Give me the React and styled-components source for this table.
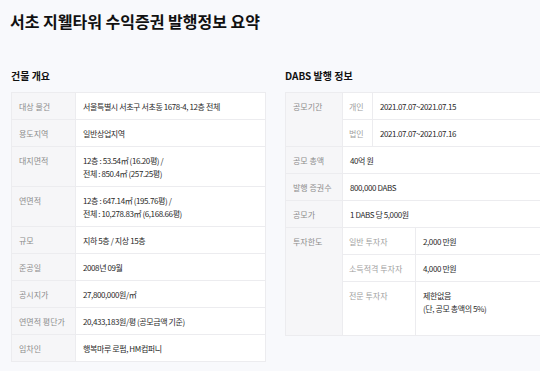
import React from 'react'
import styled, { createGlobalStyle } from 'styled-components'

const GlobalStyle = createGlobalStyle`
    html, body {
        margin: 0;
        padding: 0;
        background-color: #f8f9fc;
        overflow: hidden;
    }
    body {
        font-family: "Noto Sans CJK KR", "Noto Sans", sans-serif;
        color: #333;
    }
`

const Page = styled.div`
    padding: 10px 0 0 10px;
    width: 600px;
`
const Title = styled.h1`
    margin: 0;
    font-size: 16px;
    line-height: 22px;
    font-weight: 700;
    color: #111;
`
const Columns = styled.div`
    display: flex;
    gap: 18px;
    margin-top: 37px;
`
const Section = styled.section`
    width: ${(props) => props.width}px;
    flex-shrink: 0;
`
const SectionTitle = styled.h2`
    margin: 0 0 9px 1px;
    font-size: 10px;
    line-height: 14px;
    font-weight: 700;
    color: #111;
`
const Table = styled.div`
    margin-left: 1px;
    background-color: #fff;
    border: 1px solid #ececef;
    border-bottom: none;
`
const Row = styled.div`
    display: grid;
    grid-template-columns: ${(props) => props.labelWidth}px 1fr;
    border-bottom: 1px solid #ececef;
`
const Label = styled.div`
    background-color: #f6f6f8;
    border-right: 1px solid #ececef;
    padding: 7px 7px 6px;
    font-size: 8px;
    color: #8c8c8c;
    white-space: nowrap;
`
const Value = styled.div`
    padding: ${(props) => (props.tall ? '7px 7px 20px' : '7px 7px 6px')};
    font-size: 8px;
    letter-spacing: -0.4px;
    color: #2a2a2a;
    white-space: nowrap;
`
const Line = styled.div`
    height: 13px;
    line-height: 13px;
`
const SubList = styled.div`
    display: flex;
    flex-direction: column;
`
const SubRow = styled.div`
    display: grid;
    grid-template-columns: ${(props) => props.labelWidth}px 1fr;
    border-bottom: ${(props) => (props.last ? 'none' : '1px solid #ececef')};
`
const SubLabel = styled.div`
    border-right: 1px solid #ececef;
    padding: 7px 6px 6px;
    font-size: 8px;
    color: #a0a0a0;
    white-space: nowrap;
`

const building = [
    ['대상 물건', ['서울특별시 서초구 서초동 1678-4, 12층 전체']],
    ['용도지역', ['일반상업지역']],
    ['대지면적', ['12층 : 53.54㎡ (16.20평) /', '전체 : 850.4㎡ (257.25평)']],
    ['연면적', ['12층 : 647.14㎡ (195.76평) /', '전체 : 10,278.83㎡ (6,168.66평)']],
    ['규모', ['지하 5층 / 지상 15층']],
    ['준공일', ['2008년 09월']],
    ['공시지가', ['27,800,000원/㎡']],
    ['연면적 평단가', ['20,433,183원/평 (공모금액 기준)']],
    ['임차인', ['행복마루 로펌, HM컴퍼니']],
]

const lines = (list) =>
    list.map((line, i) => <Line key={i}>{line}</Line>)

const App = () => {
    return (
        <>
            <GlobalStyle />
            <Page>
                <Title>서초 지웰타워 수익증권 발행정보 요약</Title>
                <Columns>
                    <Section width={256}>
                        <SectionTitle>건물 개요</SectionTitle>
                        <Table>
                            {building.map(([label, value]) => (
                                <Row key={label} labelWidth={64}>
                                    <Label><Line>{label}</Line></Label>
                                    <Value>{lines(value)}</Value>
                                </Row>
                            ))}
                        </Table>
                    </Section>
                    <Section width={300}>
                        <SectionTitle>DABS 발행 정보</SectionTitle>
                        <Table>
                            <Row labelWidth={57}>
                                <Label><Line>공모기간</Line></Label>
                                <SubList>
                                    <SubRow labelWidth={30}>
                                        <SubLabel><Line>개인</Line></SubLabel>
                                        <Value><Line>2021.07.07~2021.07.15</Line></Value>
                                    </SubRow>
                                    <SubRow labelWidth={30} last>
                                        <SubLabel><Line>법인</Line></SubLabel>
                                        <Value><Line>2021.07.07~2021.07.16</Line></Value>
                                    </SubRow>
                                </SubList>
                            </Row>
                            <Row labelWidth={57}>
                                <Label><Line>공모 총액</Line></Label>
                                <Value><Line>40억 원</Line></Value>
                            </Row>
                            <Row labelWidth={57}>
                                <Label><Line>발행 증권수</Line></Label>
                                <Value><Line>800,000 DABS</Line></Value>
                            </Row>
                            <Row labelWidth={57}>
                                <Label><Line>공모가</Line></Label>
                                <Value><Line>1 DABS 당 5,000원</Line></Value>
                            </Row>
                            <Row labelWidth={57}>
                                <Label><Line>투자한도</Line></Label>
                                <SubList>
                                    <SubRow labelWidth={73}>
                                        <SubLabel><Line>일반 투자자</Line></SubLabel>
                                        <Value><Line>2,000 만원</Line></Value>
                                    </SubRow>
                                    <SubRow labelWidth={73}>
                                        <SubLabel><Line>소득적격 투자자</Line></SubLabel>
                                        <Value><Line>4,000 만원</Line></Value>
                                    </SubRow>
                                    <SubRow labelWidth={73} last>
                                        <SubLabel><Line>전문 투자자</Line></SubLabel>
                                        <Value tall>
                                            {lines(['제한없음', '(단, 공모 총액의 5%)'])}
                                        </Value>
                                    </SubRow>
                                </SubList>
                            </Row>
                        </Table>
                    </Section>
                </Columns>
            </Page>
        </>
    )
}

export default App
